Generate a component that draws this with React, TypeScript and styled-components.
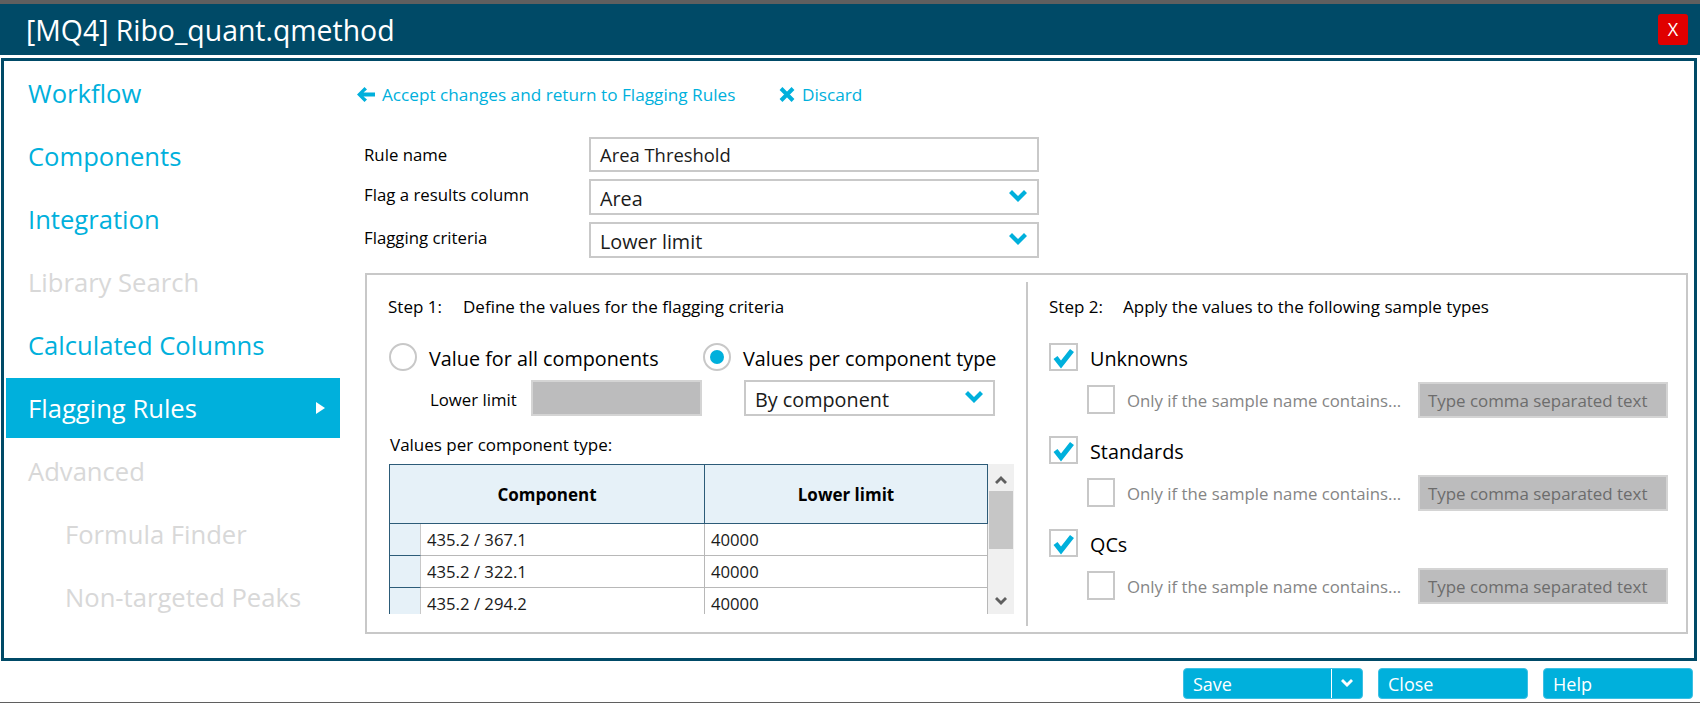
import { createGlobalStyle } from "styled-components";
import styled from "styled-components";

const GlobalStyle = createGlobalStyle`
  html, body {
    margin: 0;
    background: #fff;
    font-family: "Open Sans", "Noto Sans", "Liberation Sans", sans-serif;
    color: #000;
  }
  * { box-sizing: border-box; }
`;

const cyan = "#00b0dc";
const navy = "#004a67";

const Page = styled.div`
  width: 1700px;
  height: 703px;
  overflow: hidden;
  display: flex;
  flex-direction: column;
  border-top: 4px solid #5f5f5f;
  border-bottom: 1px solid #5f5f5f;
`;
const TitleBar = styled.header`
  flex: none;
  height: 51px;
  background: ${navy};
  display: flex;
  align-items: center;
  justify-content: space-between;
  padding: 0 12px 0 26px;
  color: #fff;
  font-size: 28.4px;
`;
const CloseX = styled.button`
  width: 30px;
  height: 31px;
  margin-top: -1px;
  border: none;
  border-radius: 3px;
  background: #e00000;
  color: #fff;
  font: 18px "Open Sans", sans-serif;
  padding: 0;
`;
const Panel = styled.div`
  flex: none;
  height: 603px;
  margin: 3px 3px 0 1px;
  border: 3px solid ${navy};
  display: flex;
`;
const Nav = styled.nav`
  flex: none;
  width: 336px;
  padding: 2px 0 0 2px;
  display: flex;
  flex-direction: column;
  gap: 3px;
`;
const NavItem = styled.div<{ $state?: "active" | "off"; $sub?: boolean }>`
  height: 60px;
  display: flex;
  align-items: center;
  justify-content: space-between;
  padding: 0 15px 0 ${p => (p.$sub ? 59 : 22)}px;
  font-size: 25.6px;
  color: ${p => (p.$state === "off" ? "#d8d8d8" : p.$state === "active" ? "#fff" : cyan)};
  background: ${p => (p.$state === "active" ? cyan : "transparent")};
`;
const Caret = styled.span`
  width: 0;
  height: 0;
  border-left: 9px solid #fff;
  border-top: 6px solid transparent;
  border-bottom: 6px solid transparent;
`;
const Content = styled.main`
  flex: 1;
  min-width: 0;
  display: flex;
  flex-direction: column;
`;
const Toolbar = styled.div`
  height: 26px;
  margin: 20px 0 0 17px;
  display: flex;
  align-items: center;
  font-size: 17.2px;
  color: ${cyan};
`;
const ToolLink = styled.a<{ $width: number }>`
  width: ${p => p.$width}px;
  display: flex;
  align-items: center;
  gap: 7px;
  white-space: nowrap;
`;
const Form = styled.div`
  margin: 30px 0 0 24px;
  display: grid;
  grid-template-columns: 225px 450px;
  grid-template-rows: 35px 36px 36px;
  row-gap: 7px;
`;
const FieldLabel = styled.label<{ $drop?: number }>`
  font-size: 16.8px;
  line-height: 36px;
  margin-top: ${p => p.$drop ?? 0}px;
`;
const Field = styled.div<{ $big?: boolean }>`
  border: 2px solid #c9c9c9;
  display: flex;
  align-items: center;
  justify-content: space-between;
  padding: ${p => (p.$big ? 2 : 0)}px 10px 0 9px;
  font-size: ${p => (p.$big ? 19.8 : 18.4)}px;
  color: #1a1a1a;
  > svg {
    margin-top: -4px;
  }
`;
const Group = styled.section`
  flex: none;
  width: 1323px;
  height: 361px;
  margin: 15px 0 0 25px;
  border: 2px solid #c8c8c8;
  display: flex;
`;
const StepLeft = styled.div`
  flex: none;
  width: 659px;
  padding: 20px 0 0 21px;
`;
const StepRight = styled.div`
  flex: 1;
  margin: 7px 0 6px;
  border-left: 2px solid #c8c8c8;
  padding: 13px 0 0 21px;
`;
const StepTitle = styled.div`
  height: 22px;
  display: flex;
  align-items: center;
  font-size: 17px;
  white-space: nowrap;
`;
const StepNo = styled.span<{ $w: number }>`
  width: ${p => p.$w}px;
`;
const Choices = styled.div`
  margin-top: 26px;
  display: grid;
  grid-template-columns: 314px 293px;
`;
const Choice = styled.div`
  display: flex;
  height: 28px;
  font-size: 19.8px;
  line-height: 32px;
  white-space: nowrap;
`;
const Radio = styled.span<{ $on?: boolean }>`
  flex: none;
  width: 28px;
  height: 28px;
  margin: 0 12px 0 1px;
  border-radius: 50%;
  border: 2px solid #c8c8c8;
  display: flex;
  align-items: center;
  justify-content: center;
  &::after {
    content: "";
    width: 14px;
    height: 14px;
    border-radius: 50%;
    background: ${p => (p.$on ? cyan : "transparent")};
  }
`;
const LimitRow = styled.div`
  margin: 9px 0 0 42px;
  display: flex;
  align-items: center;
  height: 36px;
  font-size: 16.8px;
`;
const LimitLabel = styled.span`
  width: 101px;
  padding-top: 3px;
`;
const GreyInput = styled.div<{ $w: number }>`
  width: ${p => p.$w}px;
  height: 36px;
  background: #bcbcbd;
  border: 2px solid #d4d4d4;
  display: flex;
  align-items: center;
  padding: 2px 0 0 8px;
  color: #6c6c6c;
  font-size: 16.9px;
  white-space: nowrap;
`;
const TypeSelect = styled(Field)`
  width: 251px;
  height: 36px;
  margin: 9px 0 0 42px;
`;
const TableLabel = styled.div`
  margin: 18px 0 0 2px;
  height: 22px;
  line-height: 22px;
  font-size: 17px;
`;
const Table = styled.div`
  width: 625px;
  height: 150px;
  margin: 8px 0 0 1px;
  overflow: hidden;
  display: flex;
`;
const Grid = styled.div`
  flex: none;
  width: 599px;
  border-left: 1px solid #2c5b78;
  border-top: 1px solid #2c5b78;
`;
const HeaderRow = styled.div`
  display: grid;
  grid-template-columns: 315px 283px;
  height: 59px;
  background: #e6f1f8;
  border-bottom: 1px solid #2c5b78;
`;
const HeaderCell = styled.div`
  display: flex;
  align-items: center;
  justify-content: center;
  font-size: 17px;
  font-weight: 700;
  border-right: 1px solid #2c5b78;
`;
const Row = styled.div`
  display: grid;
  grid-template-columns: 31px 284px 283px;
  height: 32px;
`;
const RowHead = styled.div`
  background: #e6f1f8;
  border-right: 1px solid #c8c8c8;
  border-bottom: 1px solid #2c5b78;
`;
const Cell = styled.div`
  display: flex;
  align-items: center;
  padding-left: 6px;
  font-size: 16.7px;
  color: #1a1a1a;
  border-right: 1px solid #b8b8b8;
  border-bottom: 1px solid #b8b8b8;
`;
const Scroll = styled.div`
  flex: 1;
  background: #f0f0f0;
  display: flex;
  flex-direction: column;
  align-items: center;
  justify-content: space-between;
  padding: 12px 0 9px;
  position: relative;
`;
const Thumb = styled.div`
  position: absolute;
  top: 27px;
  left: 1px;
  right: 1px;
  height: 58px;
  background: #c6c6c6;
`;
const SampleList = styled.div`
  margin-top: 26px;
  display: flex;
  flex-direction: column;
  gap: 19px;
`;
const SampleHead = styled.div`
  display: flex;
  height: 28px;
  gap: 12px;
  font-size: 19.8px;
  line-height: 32px;
`;
const Box = styled.span<{ $w: number; $h: number }>`
  flex: none;
  width: ${p => p.$w}px;
  height: ${p => p.$h}px;
  border: 2px solid #c8c8c8;
  display: flex;
  align-items: center;
  justify-content: center;
`;
const SampleFilter = styled.div`
  margin: 11px 0 0 38px;
  display: flex;
  align-items: center;
  height: 35px;
  font-size: 16.8px;
  color: #858585;
`;
const FilterText = styled.span`
  width: 303px;
  padding: 2px 0 0 12px;
  white-space: nowrap;
`;
const Footer = styled.footer`
  flex: 1;
  display: flex;
  justify-content: flex-end;
  gap: 15px;
  padding: 7px 7px 0 0;
`;
const Button = styled.button<{ $w: number }>`
  width: ${p => p.$w}px;
  height: 31px;
  background: ${cyan};
  border: 1px solid #3cc0e4;
  border-radius: 4px;
  color: #fff;
  font: 18px "Open Sans", sans-serif;
  text-align: left;
  padding: 0 0 0 9px;
  display: flex;
  align-items: center;
`;
const SaveLabel = styled.span`
  flex: 1;
`;
const SaveArrow = styled.span`
  width: 31px;
  height: 100%;
  border-left: 1px solid #fff;
  display: flex;
  align-items: center;
  justify-content: center;
`;

const Check = () => (
  <svg width="25" height="24" viewBox="0 0 25 24">
    <path d="M4.5 12.5 L10 19.5 L21 5.5" fill="none" stroke={cyan} strokeWidth="5" />
  </svg>
);

const Chevron = ({ w = 18, color = cyan, up = false }: { w?: number; color?: string; up?: boolean }) => (
  <svg width={w} height={w * 0.67} viewBox="0 0 18 12" transform={up ? "rotate(180)" : undefined}>
    <path d="M0 3 L3 0 L9 6 L15 0 L18 3 L9 12 Z" fill={color} />
  </svg>
);

const samples = ["Unknowns", "Standards", "QCs"];
const rows = ["435.2 / 367.1", "435.2 / 322.1", "435.2 / 294.2"];

export default function App() {
  return (
    <>
      <GlobalStyle />
      <Page>
        <TitleBar>
          [MQ4] Ribo_quant.qmethod
          <CloseX>X</CloseX>
        </TitleBar>
        <Panel>
          <Nav>
            <NavItem>Workflow</NavItem>
            <NavItem>Components</NavItem>
            <NavItem>Integration</NavItem>
            <NavItem $state="off">Library Search</NavItem>
            <NavItem>Calculated Columns</NavItem>
            <NavItem $state="active">
              Flagging Rules
              <Caret />
            </NavItem>
            <NavItem $state="off">Advanced</NavItem>
            <NavItem $state="off" $sub>Formula Finder</NavItem>
            <NavItem $state="off" $sub>Non-targeted Peaks</NavItem>
          </Nav>
          <Content>
            <Toolbar>
              <ToolLink $width={422}>
                <svg width="18" height="15" viewBox="0 0 18 15">
                  <path d="M0 7.5 L7.5 0 L10 2.5 L6.5 5.5 H18 V9.5 H6.5 L10 12.5 L7.5 15 Z" fill={cyan} />
                </svg>
                Accept changes and return to Flagging Rules
              </ToolLink>
              <ToolLink $width={100}>
                <svg width="16" height="15" viewBox="0 0 16 15">
                  <path d="M2 1.5 L14 13.5 M14 1.5 L2 13.5" fill="none" stroke={cyan} strokeWidth="4" />
                </svg>
                Discard
              </ToolLink>
            </Toolbar>
            <Form>
              <FieldLabel>Rule name</FieldLabel>
              <Field>Area Threshold</Field>
              <FieldLabel $drop={-2}>Flag a results column</FieldLabel>
              <Field $big>Area<Chevron /></Field>
              <FieldLabel $drop={-2}>Flagging criteria</FieldLabel>
              <Field $big>Lower limit<Chevron /></Field>
            </Form>
            <Group>
              <StepLeft>
                <StepTitle>
                  <StepNo $w={75}>Step 1:</StepNo>
                  Define the values for the flagging criteria
                </StepTitle>
                <Choices>
                  <Choice><Radio />Value for all components</Choice>
                  <Choice><Radio $on />Values per component type</Choice>
                  <LimitRow>
                    <LimitLabel>Lower limit</LimitLabel>
                    <GreyInput $w={171} />
                  </LimitRow>
                  <TypeSelect $big>By component<Chevron /></TypeSelect>
                </Choices>
                <TableLabel>Values per component type:</TableLabel>
                <Table>
                  <Grid>
                    <HeaderRow>
                      <HeaderCell>Component</HeaderCell>
                      <HeaderCell>Lower limit</HeaderCell>
                    </HeaderRow>
                    {rows.map(r => (
                      <Row key={r}>
                        <RowHead />
                        <Cell>{r}</Cell>
                        <Cell>40000</Cell>
                      </Row>
                    ))}
                  </Grid>
                  <Scroll>
                    <Thumb />
                    <Chevron w={12} color="#5f5f5f" up />
                    <Chevron w={12} color="#5f5f5f" />
                  </Scroll>
                </Table>
              </StepLeft>
              <StepRight>
                <StepTitle>
                  <StepNo $w={74}>Step 2:</StepNo>
                  Apply the values to the following sample types
                </StepTitle>
                <SampleList>
                  {samples.map(s => (
                    <div key={s}>
                      <SampleHead>
                        <Box $w={29} $h={28}><Check /></Box>
                        {s}
                      </SampleHead>
                      <SampleFilter>
                        <Box $w={28} $h={29} />
                        <FilterText>Only if the sample name contains...</FilterText>
                        <GreyInput $w={250}>Type comma separated text</GreyInput>
                      </SampleFilter>
                    </div>
                  ))}
                </SampleList>
              </StepRight>
            </Group>
          </Content>
        </Panel>
        <Footer>
          <Button $w={180}>
            <SaveLabel>Save</SaveLabel>
            <SaveArrow><Chevron w={12} color="#fff" /></SaveArrow>
          </Button>
          <Button $w={150}>Close</Button>
          <Button $w={150}>Help</Button>
        </Footer>
      </Page>
    </>
  );
}
